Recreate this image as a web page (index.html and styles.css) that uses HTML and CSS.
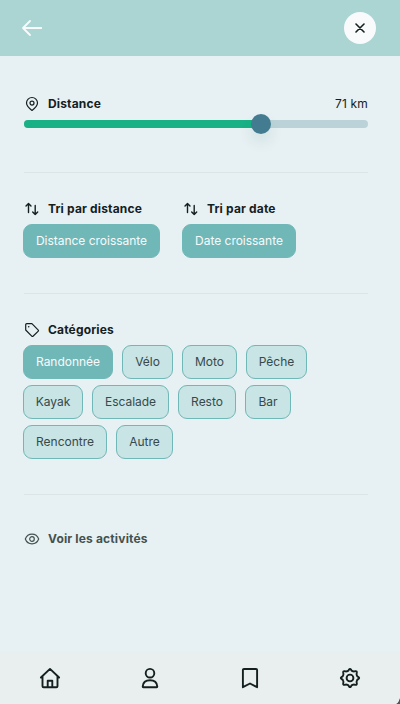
FILE: index.html
```html
<!DOCTYPE html>
<html lang="fr">
<head>
<meta charset="utf-8">
<title>Filtres</title>
<link rel="stylesheet" href="styles.css">
</head>
<body>
<header class="topbar">
  <svg class="back" viewBox="0 0 20 16"><path d="M8 1 1 8l7 7M1 8h18.500"/></svg>
  <button class="close" aria-label="Fermer"><svg viewBox="0 0 10 10"><path d="m1 1 8 8M9 1 1 9"/></svg></button>
</header>
<main class="content">
  <section class="section distance">
    <div class="heading">
      <svg class="icon" viewBox="0 0 16 16"><path d="M8 14.500C5.700 12.700 2.500 10.100 2.500 7a5.500 5.500 0 0 1 11 0c0 3.100-3.200 5.700-5.500 7.500Z"/><circle cx="8" cy="7.100" r="2"/></svg>
      <h2>Distance</h2><span class="value">71 km</span>
    </div>
    <div class="track"><div class="fill"></div><div class="thumb"></div></div>
  </section>
  <section class="section sorts">
    <div class="sort">
      <div class="heading"><svg class="icon arrows" viewBox="0 0 16 16"><path d="M4.500 11.500v-9M2 5 4.500 2.500 7 5M11.200 4.500v9M8.700 11l2.500 2.500 2.500-2.500"/></svg><h2>Tri par distance</h2></div>
      <button class="chip active sort-distance">Distance croissante</button>
    </div>
    <div class="sort">
      <div class="heading"><svg class="icon arrows" viewBox="0 0 16 16"><path d="M4.500 11.500v-9M2 5 4.500 2.500 7 5M11.200 4.500v9M8.700 11l2.500 2.500 2.500-2.500"/></svg><h2>Tri par date</h2></div>
      <button class="chip active sort-date">Date croissante</button>
    </div>
  </section>
  <section class="section categories">
    <div class="heading"><svg class="icon" viewBox="0 0 16 16"><path d="M2.700 1.700h5.200l6.400 6.400a.7.700 0 0 1 0 1L9 14.300a.7.700 0 0 1-1 0L1.700 8V2.700a1 1 0 0 1 1-1Z"/><circle class="dot" cx="4.700" cy="4.700" r=".8"/></svg><h2>Catégories</h2></div>
    <div class="chips">
      <button class="chip active w90">Randonnée</button><button class="chip w51">Vélo</button><button class="chip w55">Moto</button><button class="chip w61">Pêche</button>
      <button class="chip w60">Kayak</button><button class="chip w77">Escalade</button><button class="chip w58">Resto</button><button class="chip w46">Bar</button>
      <button class="chip w84">Rencontre</button><button class="chip w57">Autre</button>
    </div>
  </section>
  <div class="heading show"><svg class="icon" viewBox="0 0 16 16"><path d="M1.300 8C2.600 4.700 5 3.200 8 3.200s5.400 1.500 6.700 4.800c-1.300 3.300-3.700 4.800-6.700 4.800S2.600 11.300 1.300 8Z"/><circle cx="8" cy="8" r="2.300"/></svg><h2>Voir les activités</h2></div>
</main>
<nav class="tabs">
  <a><svg viewBox="0 0 24 24"><path d="M2.900 11.500 12 2.900l9.100 8.600M4.500 10.500v9.700c0 .7.400 1.100 1.100 1.100h12.800c.7 0 1.100-.4 1.100-1.100v-9.700M9.700 21v-6.300h4.600V21"/></svg></a>
  <a><svg viewBox="0 0 24 24"><circle cx="12" cy="7.200" r="4.300"/><path d="M5.300 21.200c-.4 0-.6-.3-.6-.7.300-3.700 3-6.200 7.300-6.200s7 2.500 7.300 6.200c0 .4-.2.700-.6.700Z"/></svg></a>
  <a><svg viewBox="0 0 24 24"><path d="M4.900 21.200V4.100c0-.7.400-1.100 1.100-1.100h12c.7 0 1.100.4 1.100 1.100v17.100L12 17.500Z"/></svg></a>
  <a><svg viewBox="0 0 24 24"><path d="M9.200 5.200Q10.500 4.900 11 3.600Q12 2.100 13 3.600Q13.500 4.900 14.800 5.200Q15.800 5.700 17.200 5.200Q19.200 4.800 18.800 6.800Q18.300 8.200 18.800 9.200Q19.100 10.500 20.400 11Q21.900 12 20.400 13Q19.100 13.500 18.800 14.800Q18.300 15.800 18.800 17.200Q19.200 19.200 17.200 18.800Q15.800 18.300 14.800 18.800Q13.500 19.100 13 20.400Q12 21.900 11 20.400Q10.500 19.100 9.200 18.800Q8.200 18.300 6.800 18.800Q4.800 19.200 5.200 17.200Q5.700 15.800 5.200 14.800Q4.900 13.500 3.600 13Q2.100 12 3.600 11Q4.900 10.500 5.200 9.200Q5.700 8.200 5.200 6.800Q4.800 4.800 6.800 5.200Q8.200 5.700 9.200 5.200Z"/><circle cx="12" cy="12" r="3.400"/></svg></a>
</nav>
<i class="corner"></i>
</body>
</html>
```
FILE: styles.css
```css
* { box-sizing: border-box; }
body {
  margin: 0;
  height: 704px;
  display: flex;
  flex-direction: column;
  position: relative;
  overflow: hidden;
  background: #e7f0f3;
  color: #14201f;
  font: 12px/16px Inter, sans-serif;
}
svg { fill: none; stroke: currentColor; stroke-linecap: round; stroke-linejoin: round; display: block; }
.topbar {
  height: 56px;
  padding: 0 24px 0 22px;
  display: flex;
  align-items: center;
  justify-content: space-between;
  background: #aad5d3;
}
.back { width: 20px; height: 16px; color: #f8fafc; stroke-width: 1.8; }
.close {
  width: 32px; height: 32px; padding: 0;
  border: 0; border-radius: 50%;
  display: grid; place-items: center;
  background: #f8fafc; color: #14201f;
}
.close svg { width: 10px; height: 10px; stroke-width: 1.6; }
.content { flex: 1; padding: 0 32px 0 24px; }
.section { border-bottom: 1px solid #dde4e7; }
.distance { height: 117px; padding-top: 40px; }
.sorts { height: 121px; padding-top: 28px; display: flex; }
.categories { height: 201px; padding-top: 28px; }
.heading { display: flex; align-items: center; height: 16px; }
.icon { width: 16px; height: 16px; margin-right: 8px; stroke-width: 1.2; }
.arrows { stroke-width: 1.4; }
.dot { fill: currentColor; stroke: none; }
h2 { margin: 0; font-size: 12px; line-height: 16px; font-weight: 700; letter-spacing: .16px; }
.value { margin-left: auto; letter-spacing: .15px; }
.track { height: 8px; margin-top: 8px; border-radius: 4px; background: #bbd3d8; position: relative; }
.fill { width: 69%; height: 8px; border-radius: 4px 0 0 4px; background: #17b185; }
.thumb {
  position: absolute; left: 227px; top: -6px;
  width: 20px; height: 20px; border-radius: 50%;
  background: #437c90;
  box-shadow: 0 8px 14px rgba(20, 110, 80, .1);
}
.sort { width: 159px; }
.sort .chip { margin: 7px 0 0 -1px; }
.chip {
  height: 34px; padding: 0;
  border: 1px solid #70b7b7; border-radius: 9px;
  background: #c8e4e4; color: #36494b;
  font: 12px/16px Inter, sans-serif;
  letter-spacing: -.02px;
  white-space: nowrap;
}
.active { background: #70b7b7; color: #f8fafc; }
.sort-distance { width: 137px; }
.sort-date { width: 114px; }
.chips { display: flex; flex-wrap: wrap; gap: 6px 9px; margin: 7px 50px 0 -1px; }
.w46 { width: 46px; }
.w51 { width: 51px; }
.w55 { width: 55px; }
.w57 { width: 57px; }
.w58 { width: 58px; }
.w60 { width: 60px; }
.w61 { width: 61px; }
.w77 { width: 77px; }
.w84 { width: 84px; }
.w90 { width: 90px; }
.show { margin-top: 36px; color: #43514f; }
.tabs { height: 53px; display: grid; grid-template-columns: repeat(4, 1fr); place-items: center; background: #e9eeee; }
.tabs svg { width: 24px; height: 24px; stroke-width: 1.9; }
.corner { position: absolute; right: 0; bottom: 0; width: 5px; height: 9px; background: radial-gradient(ellipse at 0 0, transparent 68%, #555 76%); }
```
